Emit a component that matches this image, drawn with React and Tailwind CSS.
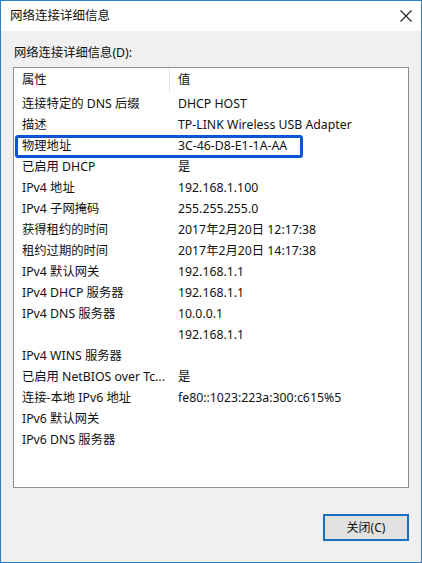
import React from 'react';

const rows = [
  ['连接特定的 DNS 后缀', 'DHCP HOST'],
  ['描述', 'TP-LINK Wireless USB Adapter'],
  ['物理地址', '3C-46-D8-E1-1A-AA', true],
  ['已启用 DHCP', '是'],
  ['IPv4 地址', '192.168.1.100'],
  ['IPv4 子网掩码', '255.255.255.0'],
  ['获得租约的时间', '2017年2月20日 12:17:38'],
  ['租约过期的时间', '2017年2月20日 14:17:38'],
  ['IPv4 默认网关', '192.168.1.1'],
  ['IPv4 DHCP 服务器', '192.168.1.1'],
  ['IPv4 DNS 服务器', '10.0.0.1'],
  ['', '192.168.1.1'],
  ['IPv4 WINS 服务器', ''],
  ['已启用 NetBIOS over Tc...', '是'],
  ['连接-本地 IPv6 地址', 'fe80::1023:223a:300:c615%5'],
  ['IPv6 默认网关', ''],
  ['IPv6 DNS 服务器', ''],
];

export default function App() {
  return (
    <div
      className="w-[422px] h-[563px] border border-[#2b7fc6] bg-[#f0f0f0] flex flex-col text-[12.3px] text-[#111]"
      style={{ fontFamily: '"Noto Sans", "Noto Sans CJK SC", sans-serif' }}
    >
      {/* title bar */}
      <div className="h-[30px] bg-white flex items-center justify-between pl-[9px] pr-[8px] shrink-0">
        <span className="text-[12.5px]">网络连接详细信息</span>
        <svg width="14" height="14" viewBox="0 0 14 14" stroke="#222" strokeWidth="1.1" fill="none">
          <path d="M1.5 1.5 L12.5 12.5 M12.5 1.5 L1.5 12.5" />
        </svg>
      </div>

      <div className="flex-1 flex flex-col px-[12px] pt-[12px]">
        <div className="h-[20px] leading-[20px] pl-[1px]">网络连接详细信息(D):</div>

        {/* list box */}
        <div className="mt-[4px] h-[421px] bg-white border border-[#8a8f96] flex flex-col">
          <div className="h-[25px] flex items-center shrink-0">
            <div className="w-[156px] pl-[8px] h-full flex items-center border-r border-[#e5e5e5]">属性</div>
            <div className="pl-[8px]">值</div>
          </div>
          <div className="pt-[1px] flex flex-col">
            {rows.map(([k, v, sel], i) => (
              <div key={i} className="relative h-[21px] flex items-center ml-[1px]">
                <div className="w-[156px] pl-[7px] whitespace-nowrap overflow-hidden">{k}</div>
                <div className="pl-[7px] whitespace-nowrap">{v}</div>
                {sel && (
                  <div className="absolute left-0 top-[-1px] w-[288px] h-[23px] border-[3px] border-[#0a55d6] rounded-[3px]" />
                )}
              </div>
            ))}
          </div>
        </div>

        <div className="flex justify-end mt-[26px]">
          <button className="w-[86px] h-[27px] bg-[#e1e1e1] border-2 border-[#1a6fc4] text-[12px] text-[#111] flex items-center justify-center">
            关闭(C)
          </button>
        </div>
      </div>
    </div>
  );
}
